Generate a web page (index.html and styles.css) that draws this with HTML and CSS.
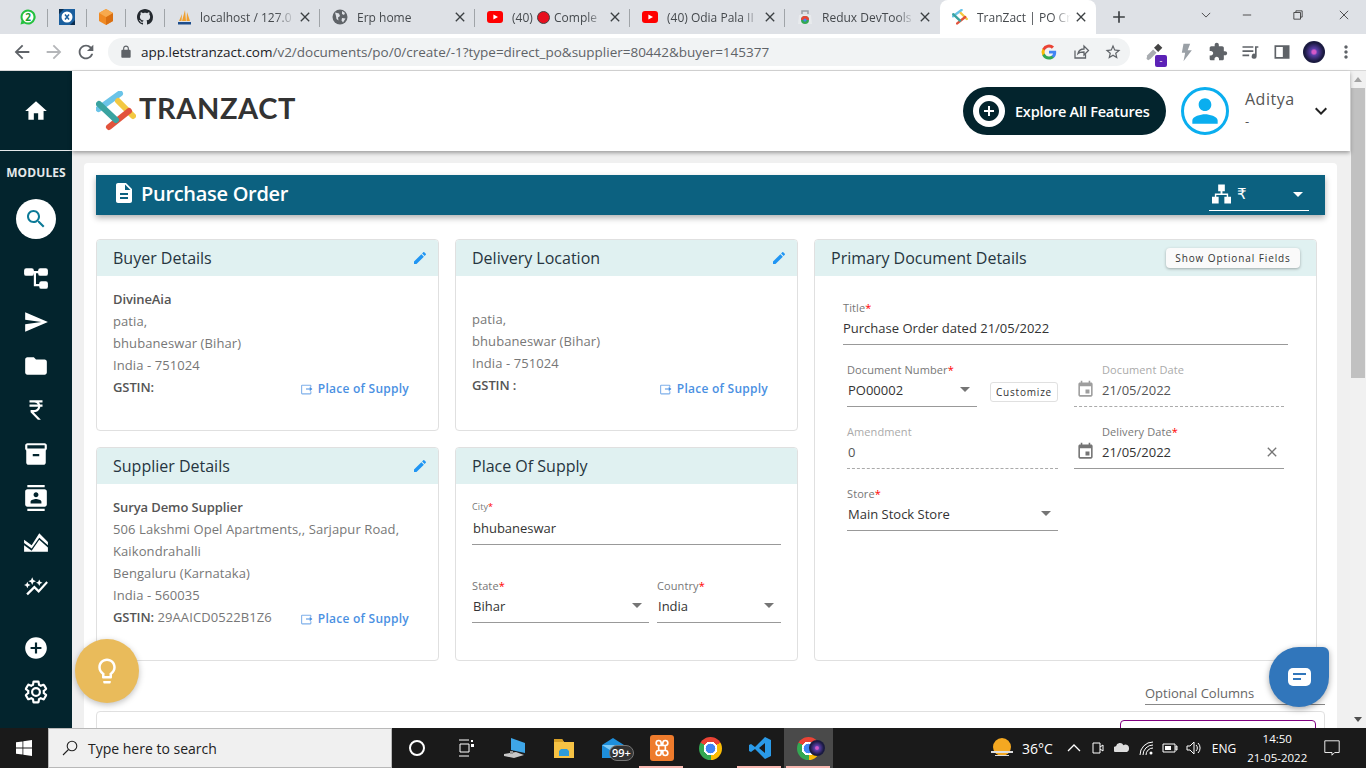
FILE: index.html
```html
<!DOCTYPE html>
<html lang="en">
<head>
    <meta charset="UTF-8">
    <title>TranZact | PO Create</title>
    <link rel="stylesheet" href="styles.css">
</head>
<body>
    <!-- icon sheet -->
    <svg class="sprite" xmlns="http://www.w3.org/2000/svg">
        <symbol id="i-close" viewBox="0 0 24 24"><path d="M19 6.41L17.59 5 12 10.59 6.41 5 5 6.41 10.59 12 5 17.59 6.41 19 12 13.41 17.59 19 19 17.59 13.41 12z"/></symbol>
        <symbol id="i-edit" viewBox="0 0 24 24"><path d="M3 17.25V21h3.75L17.81 9.94l-3.75-3.75L3 17.25zM20.71 7.04c.39-.39.39-1.02 0-1.41l-2.34-2.34c-.39-.39-1.02-.39-1.41 0l-1.83 1.83 3.75 3.75 1.83-1.83z"/></symbol>
        <symbol id="i-event" viewBox="0 0 24 24"><path d="M17 12h-5v5h5v-5zM16 1v2H8V1H6v2H5c-1.11 0-1.99.9-1.99 2L3 19c0 1.1.89 2 2 2h14c1.1 0 2-.9 2-2V5c0-1.1-.9-2-2-2h-1V1h-2zm3 18H5V8h14v11z"/></symbol>
        <symbol id="i-supply" viewBox="0 0 24 24"><path d="M20 15v4a1 1 0 0 1-1 1H4a1 1 0 0 1-1-1V5a1 1 0 0 1 1-1h15a1 1 0 0 1 1 1v3" fill="none" stroke="currentColor" stroke-width="2"/><path d="M11 10h7V7l5 4-5 4v-3h-7z"/></symbol>
        <symbol id="i-yt" viewBox="0 0 16 16"><rect y="2" width="16" height="12" rx="3" fill="#f00"/><path d="M6.4 5.4v5.2L11 8z" fill="#fff"/></symbol>
        <symbol id="i-logo" viewBox="0 0 40 40">
            <path d="M2.500 18 L24 2.500" stroke="#6bc4e8" stroke-width="6" stroke-linecap="round"/>
            <path d="M22 10 L37 25" stroke="#f3c842" stroke-width="6" stroke-linecap="round"/>
            <path d="M13 36 L33 20" stroke="#e2533c" stroke-width="6" stroke-linecap="round"/>
            <path d="M3 13 L20 29" stroke="#3aa3a0" stroke-width="6" stroke-linecap="round"/>
        </symbol>
    </svg>

    <div class="tabstrip">
        <div class="tab tab-pin">
            <svg class="fav" viewBox="0 0 16 16"><path d="M8 .5a7.500 7.500 0 0 0-6.500 11.200L.5 15.500l3.900-1A7.500 7.500 0 1 0 8 .5z" fill="#25c13f"/><circle cx="8" cy="8" r="5.500" fill="#fff"/><text x="8" y="11.500" class="fav-num">2</text></svg>
        </div>
        <div class="tab tab-pin">
            <svg class="fav" viewBox="0 0 16 16"><rect width="16" height="16" fill="#1b5f9e"/><path d="M0 0h5L0 5zM16 16h-5l5-5z" fill="#0b2d4e"/><circle cx="8" cy="8" r="5.500" fill="#fff"/><path d="M6 5.500l4 5M10 5.500l-4 5" stroke="#1b5f9e" stroke-width="1.500"/></svg>
        </div>
        <div class="tab tab-pin">
            <svg class="fav" viewBox="0 0 16 16"><path d="M8 0l7 4v8l-7 4-7-4V4z" fill="#f08a24"/><path d="M8 8l7-4v8l-7 4z" fill="#d96f12"/><path d="M8 0l7 4-7 4-7-4z" fill="#f7a94e"/></svg>
        </div>
        <div class="tab tab-pin">
            <svg class="fav" viewBox="0 0 16 16"><path fill="#24292f" d="M8 0C3.58 0 0 3.58 0 8c0 3.54 2.29 6.53 5.47 7.59.4.07.55-.17.55-.38 0-.19-.01-.82-.01-1.49-2.01.37-2.53-.49-2.69-.94-.09-.23-.48-.94-.82-1.13-.28-.15-.68-.52-.01-.53.63-.01 1.08.58 1.23.82.72 1.21 1.87.87 2.33.66.07-.52.28-.87.51-1.07-1.78-.2-3.64-.89-3.64-3.95 0-.87.31-1.59.82-2.15-.08-.2-.36-1.02.08-2.12 0 0 .67-.21 2.2.82.64-.18 1.32-.27 2-.27s1.36.09 2 .27c1.53-1.04 2.2-.82 2.2-.82.44 1.1.16 1.92.08 2.12.51.56.82 1.27.82 2.15 0 3.07-1.87 3.75-3.65 3.95.29.25.54.73.54 1.48 0 1.07-.01 1.93-.01 2.2 0 .21.15.46.55.38A8.013 8.013 0 0016 8c0-4.42-3.58-8-8-8z"/></svg>
        </div>
        <div class="tab">
            <svg class="fav" viewBox="0 0 16 16"><path d="M5 12L8 1l1 11zM9.500 12L10 3l3 9zM2 12l3-7-.5 7z" fill="#f0a030"/><path d="M1 13h13v2.500H1z" fill="#1d4d8c"/></svg>
            <span class="tab-title">localhost / 127.0</span>
            <svg class="tab-close"><use href="#i-close"/></svg>
        </div>
        <div class="tab">
            <svg class="fav" viewBox="0 0 16 16"><circle cx="8" cy="8" r="7.500" fill="#5f6368"/><path d="M3 3.500l4 1 1 2.500-2 1.500.5 3-2-1.500-.5-3zM10 2l3 2-1 2-2-1zM10 9l3.500.5L11 13.500l-1.500-2z" fill="#dee1e6"/></svg>
            <span class="tab-title tab-title-wide">Erp home</span>
            <svg class="tab-close"><use href="#i-close"/></svg>
        </div>
        <div class="tab">
            <svg class="fav"><use href="#i-yt"/></svg>
            <span class="tab-title tab-title-wide">(40) <i class="rec-dot"></i> Comple</span>
            <svg class="tab-close"><use href="#i-close"/></svg>
        </div>
        <div class="tab">
            <svg class="fav"><use href="#i-yt"/></svg>
            <span class="tab-title tab-title-wide">(40) Odia Pala II</span>
            <svg class="tab-close"><use href="#i-close"/></svg>
        </div>
        <div class="tab tab-last">
            <svg class="fav" viewBox="0 0 16 16"><path d="M5 5V2h6v3" fill="none" stroke="#9aa0a6" stroke-width="1.500"/><path d="M2 6h12l1 9H1z" fill="#e8eaed"/><circle cx="8" cy="11" r="4" fill="#34a853"/><path d="M4 11a4 4 0 0 1 8 0z" fill="#ea4335"/><circle cx="8" cy="11" r="1.600" fill="#4285f4"/></svg>
            <span class="tab-title tab-title-wide">Redux DevTools</span>
            <svg class="tab-close"><use href="#i-close"/></svg>
        </div>
        <div class="tab tab-active">
            <svg class="fav"><use href="#i-logo"/></svg>
            <span class="tab-title tab-title-wide">TranZact | PO Cr</span>
            <svg class="tab-close"><use href="#i-close"/></svg>
        </div>
        <svg class="new-tab" viewBox="0 0 24 24"><path d="M19 13h-6v6h-2v-6H5v-2h6V5h2v6h6v2z"/></svg>
        <div class="window-ctrl">
            <svg viewBox="0 0 12 12"><path d="M1 3.500l5 5 5-5" fill="none" stroke="#333"/></svg>
            <svg class="win-min" viewBox="0 0 12 12"><path d="M1 6h10" stroke="#333"/></svg>
            <svg viewBox="0 0 12 12"><path d="M3.500 3V1h7.500v7.500H9M1 3h8v8H1z" fill="none" stroke="#333"/></svg>
            <svg viewBox="0 0 12 12"><path d="M1 1l10 10M11 1L1 11" stroke="#333"/></svg>
        </div>
    </div>

    <div class="toolbar">
        <svg class="nav-btn" viewBox="0 0 24 24"><path d="M20 11H7.830l5.590-5.590L12 4l-8 8 8 8 1.410-1.410L7.830 13H20v-2z"/></svg>
        <svg class="nav-btn nav-off" viewBox="0 0 24 24"><path d="M4 13h12.170l-5.590 5.590L12 20l8-8-8-8-1.410 1.410L16.170 11H4v2z"/></svg>
        <svg class="nav-btn" viewBox="0 0 24 24"><path d="M17.650 6.350C16.200 4.900 14.210 4 12 4c-4.420 0-7.990 3.580-7.990 8s3.570 8 7.990 8c3.730 0 6.840-2.550 7.730-6h-2.080c-.82 2.330-3.040 4-5.650 4-3.310 0-6-2.690-6-6s2.690-6 6-6c1.660 0 3.140.69 4.220 1.780L13 11h7V4l-2.350 2.350z"/></svg>
        <div class="omnibox">
            <svg class="lock" viewBox="0 0 24 24"><path d="M18 8h-1V6c0-2.760-2.240-5-5-5S7 3.240 7 6v2H6c-1.100 0-2 .9-2 2v10c0 1.100.9 2 2 2h12c1.100 0 2-.9 2-2V10c0-1.100-.9-2-2-2zM9 6c0-1.660 1.340-3 3-3s3 1.340 3 3v2H9V6z"/></svg>
            <span class="url"><b>app.letstranzact.com</b>/v2/documents/po/0/create/-1?type=direct_po&amp;supplier=80442&amp;buyer=145377</span>
            <svg class="omni-icon" viewBox="0 0 24 24"><path d="M21.600 12.200c0-.7-.1-1.400-.2-2H12v3.900h5.400a4.600 4.600 0 0 1-2 3v2.500h3.200c1.900-1.700 3-4.300 3-7.400z" fill="#4285f4"/><path d="M12 22c2.700 0 5-.9 6.600-2.400l-3.200-2.500c-.9.6-2 .9-3.400.9-2.600 0-4.800-1.800-5.600-4.100H3.100v2.600A10 10 0 0 0 12 22z" fill="#34a853"/><path d="M6.400 13.900a6 6 0 0 1 0-3.800V7.500H3.100a10 10 0 0 0 0 9z" fill="#fbbc05"/><path d="M12 6c1.500 0 2.800.5 3.800 1.500l2.900-2.900A10 10 0 0 0 3.100 7.500l3.300 2.600C7.200 7.800 9.400 6 12 6z" fill="#ea4335"/></svg>
            <svg class="omni-icon" viewBox="0 0 24 24"><path d="M4 10v10h14v-5M8 14c1-4 4-6 8-6V4l6 6-6 6v-4c-3 0-6 0-8 2z" fill="none" stroke="#5f6368" stroke-width="1.700"/></svg>
            <svg class="omni-icon" viewBox="0 0 24 24"><path fill="#5f6368" d="M22 9.240l-7.190-.62L12 2 9.190 8.630 2 9.240l5.460 4.730L5.820 21 12 17.270 18.180 21l-1.630-7.030L22 9.240zM12 15.400l-3.760 2.270 1-4.280-3.320-2.880 4.380-.38L12 6.100l1.710 4.040 4.380.38-3.320 2.880 1 4.280L12 15.400z"/></svg>
        </div>
        <div class="ext-row">
            <div class="ext">
                <svg viewBox="0 0 24 24"><path d="M5 22l-2-2 1-4 7-7 4 4-7 7z" fill="#a8acb0"/><path d="M12 7l5-5 5 5-5 5z" fill="#444"/></svg>
                <i class="ext-badge">-</i>
            </div>
            <div class="ext"><svg viewBox="0 0 24 24"><path d="M9 2h8l-3 8h5L9 23l2-10H7z" fill="#9aa0a6"/></svg></div>
            <div class="ext"><svg viewBox="0 0 24 24"><path fill="#5f6368" d="M20.500 11H19V7c0-1.100-.9-2-2-2h-4V3.500C13 2.120 11.880 1 10.500 1S8 2.120 8 3.500V5H4c-1.100 0-1.990.9-1.990 2v3.800H3.500c1.490 0 2.700 1.210 2.700 2.700s-1.210 2.700-2.700 2.700H2V20c0 1.100.9 2 2 2h3.800v-1.500c0-1.490 1.210-2.700 2.700-2.700 1.490 0 2.700 1.210 2.700 2.700V22H17c1.100 0 2-.9 2-2v-4h1.500c1.380 0 2.500-1.120 2.500-2.500S21.880 11 20.500 11z"/></svg></div>
            <div class="ext"><svg viewBox="0 0 24 24"><path fill="#5f6368" d="M3 5h13v2H3zM3 10h13v2H3zM3 15h8v2H3zM18 5h4v2h-2v10a3 3 0 1 1-2-2.800z"/></svg></div>
            <div class="ext"><svg viewBox="0 0 24 24"><path fill="#5f6368" d="M3 4h18v16H3zm2 2v12h8V6z"/></svg></div>
            <div class="ext"><span class="browser-avatar"></span></div>
            <div class="ext"><svg viewBox="0 0 24 24"><path fill="#5f6368" d="M12 8c1.100 0 2-.9 2-2s-.9-2-2-2-2 .9-2 2 .9 2 2 2zm0 2c-1.100 0-2 .9-2 2s.9 2 2 2 2-.9 2-2-.9-2-2-2zm0 6c-1.100 0-2 .9-2 2s.9 2 2 2 2-.9 2-2-.9-2-2-2z"/></svg></div>
        </div>
    </div>

    <div class="app">
        <aside class="sidebar">
            <div class="side-home">
                <svg viewBox="0 0 24 24"><path d="M10 20v-6h4v6h5v-8h3L12 3 2 12h3v8z"/></svg>
            </div>
            <p class="side-label">MODULES</p>
            <div class="side-search">
                <svg viewBox="0 0 24 24"><path d="M15.500 14h-.79l-.28-.27C15.410 12.590 16 11.110 16 9.500 16 5.910 13.090 3 9.500 3S3 5.910 3 9.500 5.910 16 9.500 16c1.610 0 3.090-.59 4.230-1.570l.27.28v.79l5 4.990L20.490 19l-4.990-5zm-6 0C7.010 14 5 11.990 5 9.500S7.010 5 9.500 5 14 7.010 14 9.500 11.990 14 9.500 14z"/></svg>
            </div>
            <ul class="side-list">
                <li><svg viewBox="0 0 24 24"><rect x="1" y="3" width="9" height="7" rx="2"/><rect x="14" y="3" width="9" height="7" rx="2"/><rect x="15" y="15" width="8" height="7" rx="2"/><path d="M9 5.500h6v2h-3V17.500h4v2h-6V7.500H9z"/></svg></li>
                <li><svg viewBox="0 0 24 24"><path d="M2.010 21L23 12 2.010 3 2 10l15 2-15 2z"/></svg></li>
                <li><svg viewBox="0 0 24 24"><path d="M10 4H4c-1.100 0-1.990.9-1.990 2L2 18c0 1.100.9 2 2 2h16c1.100 0 2-.9 2-2V8c0-1.100-.9-2-2-2h-8l-2-2z"/></svg></li>
                <li><svg viewBox="0 0 24 24"><path d="M13.660 7C13.100 5.820 11.900 5 10.500 5H6V3h12v2h-3.260c.48.58.84 1.260 1.050 2H18v2h-2.020c-.25 2.800-2.610 5-5.480 5h-.73l6.730 7h-2.770L7 14v-2h3.500c1.760 0 3.220-1.300 3.460-3H6V7h7.660z"/></svg></li>
                <li><svg viewBox="0 0 24 24"><path d="M20 2H4c-1 0-2 .9-2 2v3.010c0 .72.43 1.340 1 1.690V20c0 1.100 1.100 2 2 2h14c.9 0 2-.9 2-2V8.700c.57-.35 1-.97 1-1.690V4c0-1.100-1-2-2-2zm-5 12H9v-2h6v2zm5-7H4V4l16-.02V7z"/></svg></li>
                <li><svg viewBox="0 0 24 24"><path d="M20 0H4v2h16V0zM4 24h16v-2H4v2zM20 4H4c-1.100 0-2 .9-2 2v12c0 1.100.9 2 2 2h16c1.100 0 2-.9 2-2V6c0-1.100-.9-2-2-2zm-8 2.750c1.240 0 2.250 1.010 2.250 2.250s-1.010 2.250-2.250 2.250S9.750 10.240 9.750 9 10.760 6.750 12 6.750zM17 17H7v-1.500c0-1.670 3.330-2.500 5-2.500s5 .83 5 2.500V17z"/></svg></li>
                <li><svg viewBox="0 0 24 24"><path d="M1 10l7 5 7-11 8 8v3l-8-7-7 10-7-5zM1 15l7 5 7-10 8 7v4H1z"/></svg></li>
                <li><svg viewBox="0 0 24 24"><path d="M14.060 9.940L12 9l2.060-.94L15 6l.94 2.060L18 9l-2.060.94L15 12l-.94-2.060zM4 14l.94-2.060L7 11l-2.060-.94L4 8l-.94 2.060L1 11l2.060.94L4 14zm4.500-3l1.090-2.410L12 7.500l-2.410-1.090L8.500 4 7.410 6.410 5 7.500l2.410 1.090L8.500 11zm-4 9.500l6-6.010 4 4L23 8.930l-1.410-1.410-7.090 7.970-4-4L3 19z"/></svg></li>
            </ul>
            <ul class="side-list side-bottom">
                <li><svg viewBox="0 0 24 24"><path d="M12 2C6.480 2 2 6.480 2 12s4.480 10 10 10 10-4.480 10-10S17.520 2 12 2zm5 11h-4v4h-2v-4H7v-2h4V7h2v4h4v2z"/></svg></li>
                <li><svg class="gear" viewBox="0 0 24 24"><path d="M19.140 12.940c.04-.3.060-.61.060-.94 0-.32-.02-.64-.07-.94l2.030-1.580c.18-.14.23-.41.120-.61l-1.920-3.320c-.12-.22-.37-.29-.59-.22l-2.390.96c-.5-.38-1.030-.7-1.620-.94l-.36-2.540c-.04-.24-.24-.41-.48-.41h-3.840c-.24 0-.43.17-.47.41l-.36 2.540c-.59.24-1.130.57-1.620.94l-2.390-.96c-.22-.08-.47 0-.59.22L2.740 8.870c-.12.21-.08.47.12.61l2.030 1.580c-.05.3-.09.63-.09.94s.02.64.07.94l-2.030 1.580c-.18.14-.23.41-.12.61l1.920 3.320c.12.22.37.29.59.22l2.390-.96c.5.38 1.030.7 1.620.94l.36 2.540c.05.24.24.41.48.41h3.840c.24 0 .44-.17.47-.41l.36-2.540c.59-.24 1.130-.56 1.620-.94l2.390.96c.22.08.47 0 .59-.22l1.920-3.320c.12-.22.07-.47-.12-.61l-2.010-1.580zM12 15.600c-1.980 0-3.600-1.620-3.600-3.600s1.620-3.600 3.600-3.600 3.600 1.620 3.600 3.600-1.620 3.600-3.600 3.600z"/></svg></li>
            </ul>
        </aside>

        <div class="page">
            <header class="app-header">
                <div class="brand">
                    <svg class="brand-mark"><use href="#i-logo"/></svg>
                    <span class="brand-name">TRANZACT</span>
                </div>
                <div class="explore">
                    <span class="explore-plus">
                        <svg viewBox="0 0 24 24"><path d="M12 2C6.480 2 2 6.480 2 12s4.480 10 10 10 10-4.480 10-10S17.520 2 12 2zm5 11h-4v4h-2v-4H7v-2h4V7h2v4h4v2z"/></svg>
                    </span>
                    Explore All Features
                </div>
                <div class="avatar">
                    <svg viewBox="0 0 24 24"><path d="M12 12c2.210 0 4-1.790 4-4s-1.790-4-4-4-4 1.790-4 4 1.790 4 4 4zm0 2c-2.670 0-8 1.340-8 4v2h16v-2c0-2.660-5.330-4-8-4z"/></svg>
                </div>
                <div class="user">
                    <span class="user-name">Aditya</span>
                    <span class="user-role">-</span>
                </div>
                <svg class="user-caret" viewBox="0 0 24 24"><path d="M16.590 8.590L12 13.170 7.410 8.590 6 10l6 6 6-6z"/></svg>
            </header>

            <main class="content">
                <div class="sheet">
                    <div class="banner">
                        <svg class="banner-icon" viewBox="0 0 24 24"><path d="M14 2H6c-1.100 0-1.990.9-1.990 2L4 20c0 1.100.89 2 1.990 2H18c1.100 0 2-.9 2-2V8l-6-6zm2 16H8v-2h8v2zm0-4H8v-2h8v2zm-3-5V3.500L18.500 9H13z"/></svg>
                        <h1>Purchase Order</h1>
                        <div class="currency">
                            <svg viewBox="0 0 20 20"><path d="M6.500 0h7v7H11v2.500h6V13h3v7h-7v-7h2.500v-2h-11v2H7v7H0v-7h3V9.500h6V7H6.500z"/></svg>
                            <span>₹</span>
                            <i class="arrow arrow-white"></i>
                        </div>
                    </div>

                    <div class="cards">
                        <section class="card">
                            <div class="card-head">
                                <h2>Buyer Details</h2>
                                <svg class="edit"><use href="#i-edit"/></svg>
                            </div>
                            <div class="card-body">
                                <p class="strong">DivineAia</p>
                                <p>patia,</p>
                                <p>bhubaneswar (Bihar)</p>
                                <p>India - 751024</p>
                                <div class="gst-row">
                                    <p><span class="strong">GSTIN:</span></p>
                                    <a class="supply-link"><svg><use href="#i-supply"/></svg>Place of Supply</a>
                                </div>
                            </div>
                        </section>

                        <section class="card">
                            <div class="card-head">
                                <h2>Delivery Location</h2>
                                <svg class="edit"><use href="#i-edit"/></svg>
                            </div>
                            <div class="card-body card-body-low">
                                <p>patia,</p>
                                <p>bhubaneswar (Bihar)</p>
                                <p>India - 751024</p>
                                <div class="gst-row">
                                    <p><span class="strong">GSTIN :</span></p>
                                    <a class="supply-link"><svg><use href="#i-supply"/></svg>Place of Supply</a>
                                </div>
                            </div>
                        </section>

                        <section class="card card-doc">
                            <div class="card-head">
                                <h2>Primary Document Details</h2>
                                <button class="optional-btn">Show Optional Fields</button>
                            </div>
                            <div class="doc-body">
                                <div class="field field-title">
                                    <label>Title<em>*</em></label>
                                    <div class="value">Purchase Order dated 21/05/2022</div>
                                </div>
                                <div class="doc-grid">
                                    <div class="doc-cell doc-number">
                                        <div class="field field-number">
                                            <label>Document Number<em>*</em></label>
                                            <div class="value">PO00002<i class="arrow"></i></div>
                                        </div>
                                        <button class="customize">Customize</button>
                                    </div>
                                    <div class="doc-cell date-field date-off">
                                        <svg><use href="#i-event"/></svg>
                                        <div>
                                            <label>Document Date</label>
                                            <div class="value">21/05/2022</div>
                                        </div>
                                    </div>
                                    <div class="doc-cell field field-off">
                                        <label>Amendment</label>
                                        <div class="value">0</div>
                                    </div>
                                    <div class="doc-cell date-field">
                                        <svg><use href="#i-event"/></svg>
                                        <div>
                                            <label>Delivery Date<em>*</em></label>
                                            <div class="value">21/05/2022<svg class="clear"><use href="#i-close"/></svg></div>
                                        </div>
                                    </div>
                                    <div class="doc-cell field">
                                        <label>Store<em>*</em></label>
                                        <div class="value">Main Stock Store<i class="arrow"></i></div>
                                    </div>
                                </div>
                            </div>
                        </section>

                        <section class="card">
                            <div class="card-head">
                                <h2>Supplier Details</h2>
                                <svg class="edit"><use href="#i-edit"/></svg>
                            </div>
                            <div class="card-body">
                                <p class="strong">Surya Demo Supplier</p>
                                <p>506 Lakshmi Opel Apartments,, Sarjapur Road,</p>
                                <p>Kaikondrahalli</p>
                                <p>Bengaluru (Karnataka)</p>
                                <p>India - 560035</p>
                                <div class="gst-row">
                                    <p><span class="strong">GSTIN:</span> 29AAICD0522B1Z6</p>
                                    <a class="supply-link"><svg><use href="#i-supply"/></svg>Place of Supply</a>
                                </div>
                            </div>
                        </section>

                        <section class="card">
                            <div class="card-head">
                                <h2>Place Of Supply</h2>
                            </div>
                            <div class="supply-body">
                                <div class="field field-city">
                                    <label>City<em>*</em></label>
                                    <div class="value">bhubaneswar</div>
                                </div>
                                <div class="supply-row">
                                    <div class="field">
                                        <label>State<em>*</em></label>
                                        <div class="value">Bihar<i class="arrow"></i></div>
                                    </div>
                                    <div class="field">
                                        <label>Country<em>*</em></label>
                                        <div class="value">India<i class="arrow"></i></div>
                                    </div>
                                </div>
                            </div>
                        </section>
                    </div>

                    <div class="optional-row"><span>Optional Columns</span></div>
                    <div class="lines-card"><div class="lines-btn"></div></div>
                </div>

                <div class="fab-bulb">
                    <svg viewBox="0 0 24 24"><path d="M9 21c0 .55.45 1 1 1h4c.55 0 1-.45 1-1v-1H9v1zm3-19C8.140 2 5 5.140 5 9c0 2.380 1.190 4.470 3 5.740V17c0 .55.45 1 1 1h6c.55 0 1-.45 1-1v-2.260c1.810-1.270 3-3.360 3-5.740 0-3.860-3.140-7-7-7zm2.850 11.100l-.85.6V16h-4v-2.300l-.85-.6C7.800 12.160 7 10.630 7 9c0-2.760 2.240-5 5-5s5 2.240 5 5c0 1.630-.8 3.160-2.150 4.100z"/></svg>
                </div>
                <div class="fab-chat"><i></i></div>
            </main>
        </div>

        <div class="scrollbar">
            <i class="sb-up"></i>
            <div class="sb-track"><div class="sb-thumb"></div></div>
            <i class="sb-down"></i>
        </div>
    </div>

    <footer class="taskbar">
        <div class="start">
            <svg viewBox="0 0 16 16"><path fill="#fff" d="M0 2.300L6.500 1.400v6.200H0zM7.300 1.300L16 0v7.600H7.300zM0 8.400h6.500v6.200L0 13.700zM7.300 8.400H16V16l-8.700-1.300z"/></svg>
        </div>
        <div class="search-box">
            <svg viewBox="0 0 16 16"><circle cx="10" cy="6" r="4.800" fill="none" stroke="#222" stroke-width="1.100"/><path d="M6.500 9.500L1 15" stroke="#222" stroke-width="1.100"/></svg>
            Type here to search
        </div>
        <div class="task"><svg viewBox="0 0 20 20"><circle cx="10" cy="10" r="7" fill="none" stroke="#fff" stroke-width="2"/></svg></div>
        <div class="task"><svg viewBox="0 0 20 20"><path d="M3 2h10M3 18h10M4 6h9v8H4z" fill="none" stroke="#fff"/><path d="M15 2h2v2h-2zM15 6h3v3h-3z" fill="#fff"/></svg></div>
        <div class="task"><svg class="ic-24" viewBox="0 0 24 24"><path d="M8 2l14 5v10L8 14z" fill="#3ea6e8"/><path d="M1 18l12-2 8 3-10 3-10-2z" fill="#c8c8c8"/><path d="M7 15h3v3H7z" fill="#999"/></svg></div>
        <div class="task"><svg class="ic-24" viewBox="0 0 24 24"><path d="M2 3h8l2 3h10v16H2z" fill="#f6c244"/><path d="M2 3h8l2 3H2z" fill="#d79f26"/><path d="M9 13h6l2 2v5H7v-5z" fill="#2d9bd8"/></svg></div>
        <div class="task">
            <svg class="ic-24" viewBox="0 0 24 24"><path d="M1 9l11-7 11 7v13H1z" fill="#1e8fdc"/><path d="M1 9l11 7 11-7" fill="#7fcaf5"/></svg>
            <span class="mail-count">99+</span>
        </div>
        <div class="task task-open"><span class="xampp"><svg viewBox="0 0 24 24"><path d="M8 9h8v6H8zM8 9a3 3 0 1 1 3-3v3M16 9a3 3 0 1 0-3-3v3M8 15a3 3 0 1 0 3 3v-3M16 15a3 3 0 1 1-3 3v-3" fill="none" stroke="#fff" stroke-width="2"/></svg></span></div>
        <div class="task"><span class="chrome-logo"></span></div>
        <div class="task task-open"><svg class="ic-24" viewBox="0 0 24 24"><path d="M17 1l6 3v16l-6 3L7 13l-4 3-2-1V9l2-1 4 3zM17 7l-6 5 6 5z" fill="#2a9ae8"/></svg></div>
        <div class="task task-open task-active"><span class="chrome-logo"></span><span class="browser-avatar browser-avatar-sm"></span></div>

        <div class="tray">
            <svg class="tray-sun" viewBox="0 0 24 24"><circle cx="12" cy="11" r="9" fill="#f4a821"/><path d="M1 15h22v2H1zM5 19h14v1H5z" fill="#ddd"/></svg>
            <span class="tray-temp">36°C</span>
            <svg class="tray-ic tray-caret" viewBox="0 0 16 16"><path d="M2 11l6-6 6 6" fill="none" stroke="#fff" stroke-width="1.300"/></svg>
            <svg class="tray-ic" viewBox="0 0 16 16"><path d="M3 3h7v10H3zM10 7l3-2v6l-3-2" fill="none" stroke="#fff"/></svg>
            <svg class="tray-ic" viewBox="0 0 16 16"><path d="M1 12a3 3 0 0 1 1-5.800 4 4 0 0 1 7.500-1A3.500 3.500 0 0 1 15 8.500 3.500 3.500 0 0 1 13 12z" fill="#ddd"/></svg>
            <svg class="tray-ic" viewBox="0 0 16 16"><path d="M2 15a13 13 0 0 1 13-13M5 15A10 10 0 0 1 15 5M8 15a7 7 0 0 1 7-7" fill="none" stroke="#fff"/><circle cx="13" cy="13" r="1.500" fill="#fff"/></svg>
            <svg class="tray-ic" viewBox="0 0 16 16"><path d="M1 4h12v8H1zM14 6h1v4h-1z" fill="none" stroke="#fff"/><path d="M3 6h6v4H3z" fill="#fff"/></svg>
            <svg class="tray-ic" viewBox="0 0 16 16"><path d="M1 6h3l4-4v12l-4-4H1zM10 5a4 4 0 0 1 0 6M12 3a7 7 0 0 1 0 10" fill="none" stroke="#fff"/></svg>
            <span class="tray-lang">ENG</span>
            <div class="clock"><span>14:50</span><span>21-05-2022</span></div>
            <svg class="notif" viewBox="0 0 20 20"><path d="M2 2h16v13h-5l-3 3v-3H2z" fill="none" stroke="#fff"/></svg>
        </div>
    </footer>
</body>
</html>
```

FILE: styles.css
```css
/* Page */
* {
    box-sizing: border-box;
}
html, body {
    height: 100%;
}
body {
    margin: 0;
    width: 1366px;
    height: 768px;
    overflow: hidden;
    display: flex;
    flex-direction: column;
    font-family: "Open Sans", "Noto Sans", sans-serif;
    color: #333;
    background: #fff;
}
p, h1, h2, ul {
    margin: 0;
    padding: 0;
}
ul {
    list-style: none;
}
.sprite {
    display: block;
    width: 0;
    height: 0;
    position: absolute;
}

/* Browser tabs */
.tabstrip {
    flex: none;
    height: 34px;
    display: flex;
    align-items: stretch;
    padding-left: 9px;
    background: #dee1e6;
}
.tab {
    position: relative;
    width: 155px;
    display: flex;
    align-items: center;
    padding-left: 12px;
    font-size: 12px;
    color: #45494d;
}
.tab::after {
    content: "";
    position: absolute;
    right: 0;
    top: 9px;
    bottom: 7px;
    width: 1px;
    background: #a0a4a8;
}
.tab-pin {
    width: 39px;
    padding-left: 11px;
}
.tab-last::after {
    display: none;
}
.tab-active {
    width: 156px;
    background: #fff;
    border-radius: 8px 8px 0 0;
}
.tab-active::after {
    display: none;
}
.fav {
    flex: none;
    width: 16px;
    height: 16px;
}
.fav-num {
    font-size: 10px;
    font-weight: 700;
    text-anchor: middle;
    fill: #1a9a30;
}
.tab-title {
    flex: 1;
    min-width: 0;
    margin-left: 7px;
    white-space: nowrap;
    overflow: hidden;
    -webkit-mask-image: linear-gradient(to right, #000 80%, transparent);
    mask-image: linear-gradient(to right, #000 80%, transparent);
}
.tab-title-wide {
    margin-left: 9px;
}
.rec-dot {
    display: inline-block;
    width: 13px;
    height: 13px;
    margin: 0 1px -2px;
    border-radius: 50%;
    background: #e8101e;
    border: 1px solid #444;
}
.tab-close {
    flex: none;
    width: 16px;
    height: 16px;
    margin: 0 7px 0 2px;
    fill: #3c4043;
}
.new-tab {
    width: 20px;
    height: 20px;
    align-self: center;
    margin-left: 13px;
    fill: #3c4043;
}
.window-ctrl {
    display: flex;
    align-items: center;
    margin-left: auto;
    gap: 36px;
    padding: 0 17px 4px 0;
    width: 165px;
    justify-content: flex-end;
}
.window-ctrl svg {
    width: 12px;
    height: 12px;
}
.window-ctrl .win-min {
    margin: 0 5px 0 -5px;
}

/* Browser toolbar */
.toolbar {
    flex: none;
    height: 36px;
    display: flex;
    align-items: center;
    padding-left: 11px;
    background: #fff;
}
.nav-btn {
    width: 22px;
    height: 22px;
    margin-right: 10px;
    fill: #5f6368;
}
.nav-off {
    fill: #b4b6b9;
}
.omnibox {
    width: 1022px;
    height: 28px;
    margin-left: 1px;
    display: flex;
    align-items: center;
    padding: 0 8px 0 11px;
    border-radius: 14px;
    background: #f1f3f4;
}
.lock {
    width: 14px;
    height: 14px;
    fill: #5f6368;
}
.url {
    flex: 1;
    margin-left: 8px;
    font-size: 13.5px;
    letter-spacing: -0.01px;
    color: #5f6368;
    white-space: nowrap;
}
.url b {
    font-weight: 400;
    color: #202124;
}
.omni-icon {
    width: 18px;
    height: 18px;
    margin-left: 14px;
}
.ext-row {
    display: flex;
    margin-left: 8px;
}
.ext {
    position: relative;
    width: 32px;
    height: 22px;
    display: flex;
    align-items: center;
    justify-content: center;
}
.ext svg {
    width: 20px;
    height: 20px;
}
.ext-badge {
    position: absolute;
    right: 3px;
    bottom: -4px;
    width: 12px;
    height: 12px;
    border-radius: 2px;
    background: #5b21b6;
    color: #fff;
    font-size: 9px;
    line-height: 12px;
    text-align: center;
    font-style: normal;
}
.browser-avatar {
    display: block;
    width: 22px;
    height: 22px;
    border-radius: 50%;
    background: radial-gradient(circle at 50% 50%, #d45ac8 0 12%, #5a3ea8 22%, #1a1a40 60%);
}
.browser-avatar-sm {
    position: absolute;
    left: 25px;
    top: 12px;
    width: 16px;
    height: 16px;
}

/* App frame */
.app {
    flex: 1;
    min-height: 0;
    display: flex;
    border-top: 1px solid #d8d8d8;
}
.sidebar {
    flex: none;
    width: 72px;
    display: flex;
    flex-direction: column;
    align-items: center;
    background: #03242d;
    color: #fff;
}
.sidebar svg {
    fill: #fff;
}
.side-home {
    width: 100%;
    height: 80px;
    display: flex;
    align-items: center;
    justify-content: center;
    border-bottom: 1px solid #e4e8ea;
}
.side-home svg {
    width: 26px;
    height: 26px;
}
.side-label {
    margin-top: 13px;
    font-size: 12px;
    line-height: 17px;
    font-weight: 700;
    letter-spacing: 0.1px;
    color: #e4e8ea;
}
.side-search {
    width: 40px;
    height: 40px;
    margin-top: 18px;
    display: flex;
    align-items: center;
    justify-content: center;
    border-radius: 50%;
    background: #fff;
}
.sidebar .side-search svg {
    width: 24px;
    height: 24px;
    fill: #0c7a97;
}
.side-list {
    margin-top: 17px;
}
.side-list li {
    width: 72px;
    height: 44px;
    display: flex;
    align-items: center;
    justify-content: center;
}
.side-list svg {
    width: 26px;
    height: 26px;
}
.side-bottom {
    margin-top: 18px;
}
.sidebar .gear {
    fill: none;
    stroke: #fff;
    stroke-width: 2;
}

/* App header */
.page {
    flex: 1;
    min-width: 0;
    display: flex;
    flex-direction: column;
    position: relative;
    background: #f0f0f0;
}
.app-header {
    flex: none;
    height: 80px;
    position: relative;
    z-index: 2;
    display: flex;
    align-items: center;
    padding: 0 17px 0 24px;
    background: #fff;
    box-shadow: 0 2px 4px rgba(0, 0, 0, 0.35);
}
.brand {
    display: flex;
    align-items: center;
    margin-right: auto;
}
.brand-mark {
    width: 40px;
    height: 40px;
}
.brand-name {
    margin: 0 0 8px 3px;
    font-family: Lato, sans-serif;
    font-size: 29px;
    font-weight: 700;
    letter-spacing: 0.6px;
    color: #333;
}
.explore {
    width: 203px;
    height: 48px;
    display: flex;
    align-items: center;
    padding-left: 10px;
    border-radius: 24px;
    background: #03242d;
    color: #fff;
    font-size: 14.5px;
    font-weight: 600;
    letter-spacing: -0.22px;
}
.explore-plus {
    width: 32px;
    height: 32px;
    margin-right: 10px;
    display: flex;
    align-items: center;
    justify-content: center;
    border-radius: 50%;
    background: #fff;
}
.explore-plus svg {
    width: 24px;
    height: 24px;
    fill: #03242d;
}
.avatar {
    width: 48px;
    height: 48px;
    margin-left: 15px;
    display: flex;
    align-items: center;
    justify-content: center;
    border: 3px solid #0aaeef;
    border-radius: 50%;
}
.avatar svg {
    width: 38px;
    height: 38px;
    fill: #0aaeef;
}
.user {
    width: 64px;
    margin: -2px 0 0 16px;
    display: flex;
    flex-direction: column;
    color: #555;
}
.user-name {
    font-size: 16px;
    line-height: 22px;
    letter-spacing: 0.5px;
}
.user-role {
    font-size: 13px;
    line-height: 22px;
}
.user-caret {
    width: 24px;
    height: 24px;
    fill: #222;
}

/* Content sheet */
.content {
    flex: 1;
    min-height: 0;
    position: relative;
    overflow: hidden;
    padding: 12px 13px 0 12px;
}
.sheet {
    height: 620px;
    padding: 12px;
    border-radius: 4px;
    background: #fff;
}
.banner {
    height: 40px;
    display: flex;
    align-items: center;
    padding: 0 16px 0 19px;
    background: #0c6180;
    color: #fff;
    box-shadow: 0 3px 6px rgba(0, 0, 0, 0.3);
}
.banner-icon {
    width: 24px;
    height: 24px;
    margin: -4px 0 0 -3px;
    fill: #fff;
}
.banner h1 {
    margin: 0 0 4px 5px;
    font-size: 20px;
    font-weight: 600;
    letter-spacing: -0.3px;
}
.currency {
    width: 100px;
    height: 30px;
    margin: 0 0 -1px auto;
    display: flex;
    align-items: center;
    padding: 0 6px 2px 3px;
    border-bottom: 1px solid #fff;
}
.currency svg {
    flex: none;
    width: 19px;
    height: 20px;
    fill: #fff;
}
.currency span {
    margin-left: 6px;
    font-family: "DejaVu Sans", sans-serif;
    font-size: 15px;
    line-height: 20px;
}
.arrow {
    display: block;
    width: 0;
    height: 0;
    margin-left: auto;
    border-left: 5px solid transparent;
    border-right: 5px solid transparent;
    border-top: 5px solid #757575;
}
.arrow-white {
    border-top-color: #fff;
}

/* Cards */
.cards {
    display: grid;
    grid-template-columns: 343px 343px 503px;
    grid-template-rows: 192px 214px;
    gap: 16px;
    margin-top: 24px;
}
.card {
    display: flex;
    flex-direction: column;
    border: 1px solid #e0e0e0;
    border-radius: 4px;
    overflow: hidden;
    background: #fff;
}
.card-doc {
    grid-column: 3;
    grid-row: 1 / span 2;
}
.card-head {
    flex: none;
    height: 36px;
    display: flex;
    align-items: center;
    justify-content: space-between;
    padding: 0 10px 0 16px;
    background: #e0f1f1;
}
.card-head h2 {
    font-size: 16px;
    font-weight: 400;
    color: #263540;
}
.edit {
    width: 16px;
    height: 16px;
    fill: #2196f3;
}
.card-body {
    padding: 12px 29px 0 16px;
    font-size: 13px;
    line-height: 22px;
    letter-spacing: 0.09px;
    color: #777;
    white-space: nowrap;
}
.card-body-low {
    padding-top: 32px;
}
.card-body-low .supply-link {
    margin-top: 4px;
}
.strong {
    font-weight: 600;
    letter-spacing: -0.1px;
    color: #555;
}
.gst-row {
    display: flex;
    justify-content: space-between;
    align-items: flex-start;
    height: 22px;
}
.supply-link {
    display: flex;
    align-items: center;
    margin-top: 2px;
    font-size: 12px;
    line-height: 22px;
    font-weight: 600;
    letter-spacing: 0.25px;
    color: #4a90e2;
}
.supply-link svg {
    width: 13px;
    height: 13px;
    margin-right: 5px;
    fill: #4a90e2;
    color: #7fb0ea;
}

/* Form fields */
.field label,
.date-field label {
    display: block;
    font-size: 11px;
    line-height: 14px;
    letter-spacing: 0.1px;
    color: #777;
}
label em {
    font-style: normal;
    color: #f00;
}
.value {
    height: 29px;
    display: flex;
    align-items: center;
    margin-top: 1px;
    padding: 0 1px 5px;
    font-size: 13px;
    color: #333;
    border-bottom: 1px solid #999;
}
.value .arrow {
    margin-right: 6px;
}
.doc-body {
    padding: 25px 28px 0;
}
.field-title .value {
    padding-left: 0;
}
.doc-grid {
    display: grid;
    grid-template-columns: 211px 210px;
    grid-auto-rows: 62px;
    column-gap: 16px;
    margin: 18px 4px 0 4px;
}
.doc-number {
    display: flex;
    align-items: flex-start;
}
.field-number {
    width: 130px;
}
.customize {
    width: 68px;
    height: 20px;
    margin: 19px 0 0 13px;
    padding: 0;
    font-family: inherit;
    font-size: 10px;
    letter-spacing: 0.8px;
    color: #333;
    background: #fff;
    border: 1px solid #e0e0e0;
    border-radius: 3px;
}
.date-field {
    position: relative;
}
.date-field > svg {
    position: absolute;
    left: 2px;
    top: 17px;
    width: 19px;
    height: 19px;
    fill: #757575;
}
.date-field label {
    padding-left: 28px;
}
.date-field .value {
    padding-left: 28px;
}
.clear {
    width: 16px;
    height: 16px;
    margin: 0 3px 0 auto;
    fill: #757575;
}
.date-off label,
.field-off label {
    color: #aaa;
}
.date-off .value,
.field-off .value {
    color: #555;
    border-bottom: 1px dashed #aaa;
}
.date-off > svg {
    fill: #9e9e9e;
}
.optional-btn {
    width: 134px;
    height: 20px;
    margin-right: 6px;
    padding: 0;
    font-family: inherit;
    font-size: 10px;
    letter-spacing: 0.9px;
    color: #333;
    background: #fafafa;
    border: 0;
    border-radius: 4px;
    box-shadow: 0 1px 3px rgba(0, 0, 0, 0.3);
}
.supply-body {
    padding: 16px 16px 0;
}
.field-city label {
    font-size: 9px;
}
.field-city .value {
    height: 30px;
    padding-bottom: 3px;
}
.supply-row {
    display: grid;
    grid-template-columns: 177px 124px;
    column-gap: 8px;
    margin-top: 34px;
}

/* Below the cards */
.optional-row {
    display: flex;
    justify-content: flex-end;
    margin-top: 24px;
}
.optional-row span {
    width: 180px;
    height: 20px;
    font-size: 13px;
    line-height: 17px;
    color: #666;
    border-bottom: 1px solid #888;
}
.lines-card {
    height: 60px;
    margin-top: 6px;
    padding: 8px 8px 0 0;
    border: 1px solid #e0e0e0;
    border-radius: 4px;
}
.lines-btn {
    width: 196px;
    height: 40px;
    margin-left: auto;
    border: 1px solid #800080;
    border-radius: 4px;
}

/* Floating buttons */
.fab-bulb {
    position: absolute;
    left: 3px;
    top: 488px;
    z-index: 3;
    width: 64px;
    height: 64px;
    display: flex;
    align-items: center;
    justify-content: center;
    border-radius: 50%;
    background: #e9bb5b;
    box-shadow: 0 2px 6px rgba(0, 0, 0, 0.25);
}
.fab-bulb svg {
    width: 30px;
    height: 30px;
    fill: #fff;
}
.fab-chat {
    position: absolute;
    left: 1197px;
    top: 496px;
    z-index: 3;
    width: 60px;
    height: 60px;
    display: flex;
    align-items: center;
    justify-content: center;
    border-radius: 50% 6px 50% 50%;
    background: #3176bb;
    box-shadow: 0 2px 6px rgba(0, 0, 0, 0.35);
}
.fab-chat i {
    width: 23px;
    height: 18px;
    border-radius: 5px;
    background: linear-gradient(#3176bb, #3176bb) 5px 5px / 13px 2px no-repeat,
                linear-gradient(#3176bb, #3176bb) 5px 10px / 8px 2px no-repeat,
                #fff;
}

/* Scrollbar */
.scrollbar {
    flex: none;
    width: 16px;
    display: flex;
    flex-direction: column;
    background: #f1f1f1;
}
.sb-track {
    flex: 1;
    padding: 0 1px;
}
.sb-thumb {
    height: 290px;
    background: #c1c1c1;
}
.sb-up,
.sb-down {
    display: block;
    height: 17px;
    position: relative;
}
.sb-up::after,
.sb-down::after {
    content: "";
    position: absolute;
    left: 4px;
    top: 6px;
    border-left: 4px solid transparent;
    border-right: 4px solid transparent;
}
.sb-up::after {
    border-bottom: 5px solid #a3a3a3;
}
.sb-down::after {
    border-top: 5px solid #505050;
}

/* Windows taskbar */
.taskbar {
    flex: none;
    height: 40px;
    display: flex;
    align-items: stretch;
    background: #1a1a1a;
    color: #fff;
}
.start {
    width: 48px;
    display: flex;
    align-items: center;
    justify-content: center;
}
.start svg {
    width: 16px;
    height: 16px;
}
.search-box {
    width: 344px;
    display: flex;
    align-items: center;
    padding-left: 13px;
    font-size: 14px;
    color: #222;
    background: #f0f0f0;
    border: 1px solid #b8b8b8;
}
.search-box svg {
    width: 16px;
    height: 16px;
    margin-right: 10px;
}
.task {
    position: relative;
    width: 49px;
    display: flex;
    align-items: center;
    justify-content: center;
}
.task svg {
    width: 20px;
    height: 20px;
}
.task .ic-24 {
    width: 24px;
    height: 24px;
}
.task-open::after {
    content: "";
    position: absolute;
    left: 2px;
    right: 3px;
    bottom: 0;
    height: 2px;
    background: #f7b7b0;
}
.task-active {
    background: #4a4a4a;
}
.mail-count {
    position: absolute;
    left: 21px;
    top: 17px;
    padding: 0 2px;
    font-size: 11px;
    line-height: 14px;
    font-weight: 600;
    background: #333;
    border: 1px solid #777;
    border-radius: 8px;
}
.xampp {
    width: 24px;
    height: 26px;
    display: flex;
    align-items: center;
    justify-content: center;
    border-radius: 3px;
    background: #ee7b2c;
}
.chrome-logo {
    display: block;
    width: 23px;
    height: 23px;
    border-radius: 50%;
    background: radial-gradient(circle, #4285f4 0 30%, #fff 31% 42%, transparent 43%),
                conic-gradient(from -60deg, #ea4335 0 120deg, #fbbc05 120deg 240deg, #34a853 240deg);
}
.tray {
    flex: 1;
    display: flex;
    align-items: center;
    padding-left: 157px;
    font-size: 13px;
    white-space: nowrap;
}
.tray-sun {
    width: 24px;
    height: 24px;
}
.tray-temp {
    margin-left: 8px;
    font-size: 14px;
}
.tray-ic {
    width: 16px;
    height: 16px;
    margin-left: 8px;
}
.tray-caret {
    margin-left: 13px;
}
.tray-lang {
    margin-left: 10px;
    font-size: 12px;
}
.clock {
    width: 72px;
    margin-left: 5px;
    display: flex;
    flex-direction: column;
    align-items: center;
    font-size: 11.5px;
    line-height: 19px;
}
.notif {
    width: 18px;
    height: 18px;
    margin-left: 10px;
}
```
